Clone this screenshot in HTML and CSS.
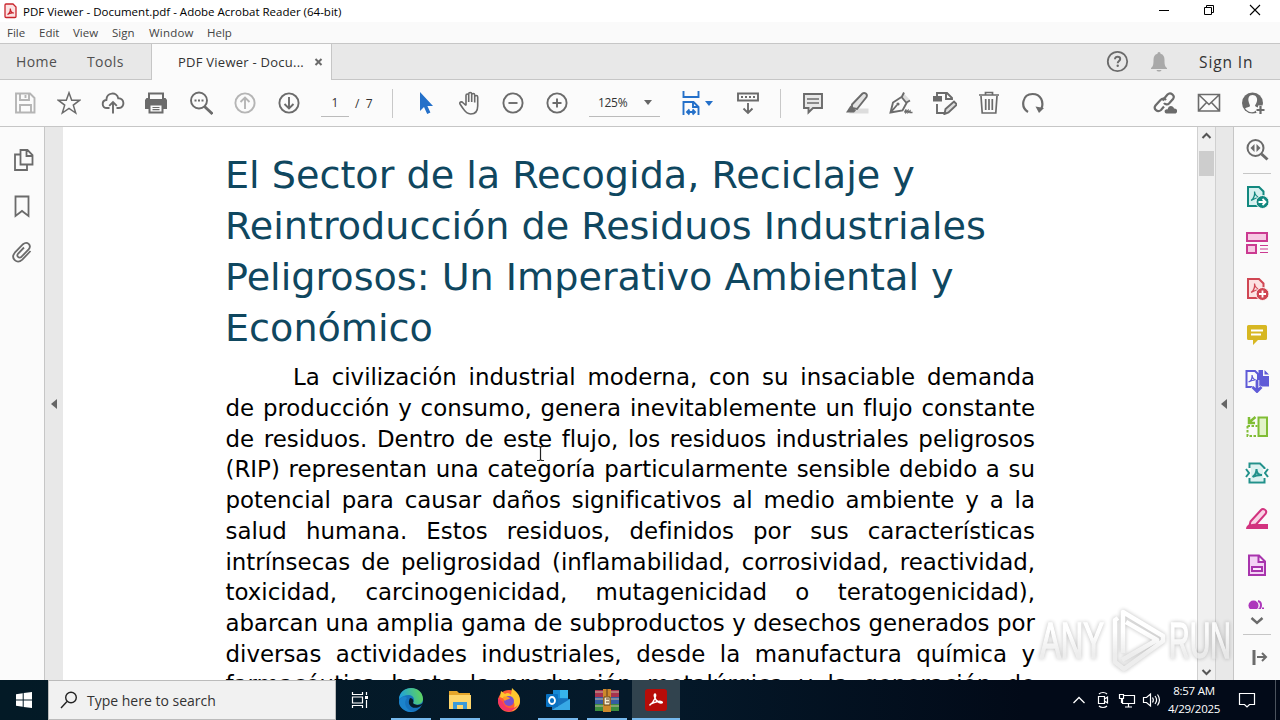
FILE: index.html
```html
<!DOCTYPE html>
<html lang="es">
  <head>
    <meta charset="UTF-8" />
    <meta name="viewport" content="width=device-width, initial-scale=1.0" />
    <title>PDF Viewer - Document.pdf</title>
    <link rel="stylesheet" href="styles.css">
  </head>
  <body>
    <div class="titlebar">
      <svg class="app-icon" width="13" height="16" viewBox="0 0 13 16"><path d="M2 1h7l3 3v9.500q0 1-1 1H2q-1 0-1-1V2q0-1 1-1z" fill="#fbe3e3" stroke="#c9252d" stroke-width="1.300"/><path d="M3.500 11.500c2-1 3-3.500 2.800-6 .2 2.500 1.700 4.500 3.700 4.500-3-.5-5 .2-6.500 1.500z" fill="none" stroke="#c9252d" stroke-width="1.200"/></svg>
      <span class="title">PDF Viewer - Document.pdf - Adobe Acrobat Reader (64-bit)</span>
      <div class="window-btns">
        <svg width="46" height="22"><path d="M19 10.500h10" stroke="#000"/></svg>
        <svg width="46" height="22"><path d="M18.500 7.500h7v7h-7zM20.500 7.500v-2h7v7h-2" fill="none" stroke="#000"/></svg>
        <svg width="46" height="22"><path d="M18 5l10 10M28 5l-10 10" stroke="#000" stroke-width="1.100"/></svg>
      </div>
    </div>
    <div class="menubar">
      <span class="m-file">File</span><span class="m-edit">Edit</span><span class="m-view">View</span><span class="m-sign">Sign</span><span class="m-window">Window</span><span class="m-help">Help</span>
    </div>
    <div class="tabs">
      <div class="tab-link home">Home</div>
      <div class="tab-link tools">Tools</div>
      <div class="tab">
        <span class="tab-name">PDF Viewer - Docu...</span>
        <svg width="9" height="9" viewBox="0 0 9 9"><path d="M1.500 1l6 6M7.500 1l-6 6" stroke="#6b6b6b" stroke-width="2"/></svg>
      </div>
      <div class="account">
        <svg class="help" width="24" height="24" viewBox="0 0 24 24"><circle cx="12.500" cy="11.500" r="9.700" fill="none" stroke="#6b6b6b" stroke-width="1.800"/><path d="M10 9.300c0-3.600 5.200-3.200 5.200-.3 0 2-2.500 2-2.500 4.200" fill="none" stroke="#6b6b6b" stroke-width="2"/><circle cx="12.700" cy="15.800" r="1.200" fill="#6b6b6b"/></svg>
        <svg class="bell" width="18" height="22" viewBox="0 0 18 22"><path d="M9 1c1 0 1.500.8 1.500 1.800 3 .7 4 3 4 6.200 0 5 .5 6.500 2.500 8v1H1v-1c2-1.500 2.500-3 2.500-8 0-3.200 1-5.500 4-6.200C7.500 1.800 8 1 9 1zM6.500 19h5c-.5 2-4.500 2-5 0z" fill="#a9a9a9"/></svg>
        <span class="signin">Sign In</span>
      </div>
    </div>

    <div class="toolbar">
      <div class="tool off"><svg viewBox="0 0 24 24"><path d="M3 2.500h14l4.500 4.500V21.500H3zM7 3v6h9V3M7 21v-7h11v7M12.500 4v3"/></svg></div>
      <div class="tool"><svg viewBox="0 0 24 24"><path d="M12 1.800l2.700 7.400h8l-6.400 4.900 2.400 7.900-6.700-4.700L5.300 22l2.400-7.900-6.400-4.900h8z" stroke-width="1.500"/></svg></div>
      <div class="tool"><svg viewBox="0 0 24 24"><path d="M8.500 17H6c-5.500 0-5.700-7.500-.6-8C5.500 1 16 .5 17.200 7.200 24 7 24 17 18 17h-2.500M12 22.500V11M8.200 14.800L12 11l3.800 3.800"/></svg></div>
      <div class="tool print"><svg viewBox="0 0 24 24"><path class="solid" d="M4 1.500h16v5.500h1.500L23 9v9h-3.500v4.500h-15V18H1V9l1.500-2H4z"/><path d="M6 3.500h12V8H6zM6.500 14.500h11v6h-11z" style="fill:#fbfbfb;stroke:none"/><path d="M8.500 16.500h7M8.500 18.700h7" style="stroke-width:1.2"/></svg></div>
      <div class="tool"><svg viewBox="0 0 24 24"><circle cx="10" cy="9.500" r="8"/><path d="M15.500 15.500l8 7.500" style="stroke-width:2.800"/><path d="M5.500 9.500h2M9 9.500h2M12.500 9.500h2"/></svg></div>
      <div class="tool off"><svg viewBox="0 0 24 24"><circle cx="12" cy="12" r="9.600"/><path d="M12 18V6.500M7.500 11L12 6.500l4.500 4.500"/></svg></div>
      <div class="tool"><svg viewBox="0 0 24 24"><circle cx="12" cy="12" r="9.600"/><path d="M12 6v11.500M7.500 13l4.500 4.500 4.500-4.500"/></svg></div>
      <div class="page-no">1</div>
      <div class="page-total">/&nbsp; 7</div>
      <div class="sep sep-a"></div>
      <div class="tool"><svg viewBox="0 0 24 24"><path d="M7 1v19l4-4 3.200 7 3.200-1.500-3-6.500H20z" style="fill:#2470c9;stroke:none"/></svg></div>
      <div class="tool"><svg viewBox="0 0 24 24"><path d="M7 14.500V4.500c0-2 2.700-2 2.700 0V11 3c0-2 3-2 3 0v8-7c0-2 3-2 3 0v7.500V6c0-2 3-2 3 0v9c0 5-2 8-7 8-4 0-5.500-2-7.500-5.300L1 13c-1-2 1.500-3 3-1.200L7 14.500" transform="translate(2 0)" style="stroke-width:1.600"/></svg></div>
      <div class="tool"><svg viewBox="0 0 24 24"><circle cx="12" cy="12" r="9.600"/><path d="M7.500 12h9"/></svg></div>
      <div class="tool"><svg viewBox="0 0 24 24"><circle cx="12" cy="12" r="9.600"/><path d="M7.500 12h9M12 7.500v9"/></svg></div>
      <div class="zoom"><span>125%</span><i class="caret"></i></div>
      <div class="fit"><svg width="20" height="26" viewBox="0 0 20 26"><path d="M2.500 1v6h15V1M2.500 25V12h10l5 5v8M12 12v5h5M6 22h8M8.500 19.500L6 22l2.500 2.500M11.500 19.500L14 22l-2.500 2.500" fill="none" stroke="#2470c9" stroke-width="1.900"/></svg><i class="caret blue"></i></div>
      <div class="tool scroll-tool"><svg viewBox="0 0 24 24"><path d="M2 2.500h20v7H2zM5 6h2M9 6h2M13 6h2M17 6h2M12 12v10M7.500 17.500L12 22l4.500-4.500"/></svg></div>
      <div class="sep sep-b"></div>
      <div class="tool"><svg viewBox="0 0 24 24"><path d="M3 3h18v14h-9l-4.500 4.500V17H3z" style="fill:#e8e8e8"/><path d="M6 8h12M6 12h12" style="stroke-width:1.300"/></svg></div>
      <div class="tool"><svg viewBox="0 0 24 24"><path d="M9 17.500h14.500v5H4z" style="fill:#ddd;stroke:none"/><path d="M7 13.500L17.500 2.500c2-1.500 5.500.5 4 3.500L12 18l-5-1z" style="fill:#e2e2e2"/><path class="solid" d="M5.500 14.500l5.500 5-2 2H1z"/></svg></div>
      <div class="tool"><svg viewBox="0 0 24 24"><path d="M15 2.500l6 6.500-3 2-4.500-5z" style="fill:#ddd;stroke:none"/><path d="M1.500 21.500L4 11.500l8.500-5.500 5 6-4 7.500zM2 21l6-7M12.500 6.500l2.500-5M17.500 11.500l3.500-2"/><circle class="solid" cx="9" cy="13" r="1.600"/><path d="M15.500 21.500l1.500-3v3l2-2v2l2-1.500v1.500h2.500" style="stroke-width:1.400"/></svg></div>
      <div class="tool"><svg viewBox="0 0 24 24"><path class="solid" d="M0 5h9v5.500H0z"/><path d="M4 5V2h10l5 5v2M13 2v6h6M4 13v9h7"/><path d="M11.500 23l1-5 8.500-7.500 3 3-8.500 8z" style="fill:#ddd"/></svg></div>
      <div class="tool"><svg viewBox="0 0 24 24"><path d="M2 4h20M8.500 4V1.500h7V4M4 5l1.200 17h13.600L20 5M8.700 8v11M12 8v11M15.300 8v11" style="stroke-width:1.700"/></svg></div>
      <div class="tool"><svg viewBox="0 0 24 24"><path d="M7 21C-1 16 1.500 3 11.500 3c8.500 0 11.500 8 9 14.500" style="stroke-width:2.200"/><path class="solid" d="M14.500 15.500l8.500 1.500-5 5z"/></svg></div>
      <div class="share">
        <div class="tool"><svg viewBox="0 0 24 24"><path d="M9.500 9.500l5-6c3-3 8 1 5.500 4.500l-4 4.500c-1.500 1.500-4 1-5-.5M13 9c-1.500-2-4-1.500-5.500 0l-5 5.500C0 18 4.500 22 8 19l3-3.500" style="stroke-width:2.200"/><path class="solid" d="M13.500 22.500c-3.500-1-1.500-5 1-4 1-5 6-4 6.500-1 4-.5 4 5 1 5z"/></svg></div>
        <div class="tool"><svg viewBox="0 0 24 24"><path d="M1.500 3.500h21v16.500h-21zM2 4l10 9.500L22 4M2 19.500l7.500-8M22 19.500l-7.500-8" style="stroke-width:1.600"/></svg></div>
        <div class="tool"><svg viewBox="0 0 24 24"><circle class="solid" cx="11.500" cy="12" r="10.500"/><path d="M11.500 4c-3.500 0-4.500 3-4 6 .3 2 1.500 4 1.500 5s-4 1.500-5 2.500c4 5 10 5 13-.5l-3-2c0-1 1.700-3 2-5 .5-3-1-6-4.500-6z" style="fill:#fbfbfb;stroke:none"/><path d="M19.500 14.500v9M15 19h9" style="stroke:#fbfbfb;stroke-width:5"/><path d="M19.500 15v8M15.500 19h8" style="stroke-width:2.200"/></svg></div>
      </div>
    </div>

    <div class="workspace">
      <div class="left-rail">
        <svg viewBox="0 0 24 24"><path d="M9.500 2h7l5 5v9.500h-12zM15.500 2v6h6M9 6.500H4v15.500h12V17"/></svg>
        <svg viewBox="0 0 24 24"><path d="M4.500 2.500h13V22l-6.500-5-6.500 5z"/></svg>
        <svg viewBox="0 0 24 24"><path d="M19.500 11l-8.200 8.700c-5.500 5-12-1.500-7.500-7L12 4.200c4.200-3.500 9 1 5.600 5.200l-7 7.300c-2.800 2.300-5.600-.6-3.400-3.200l5.800-6"/></svg>
      </div>
      <div class="gutter left-gutter"><i class="collapse"></i></div>
      <div class="page">
        <h1>El Sector de la Recogida, Reciclaje y<br />Reintroducción de Residuos Industriales<br />Peligrosos: Un Imperativo Ambiental y<br />Económico</h1>
        <div class="text">
          <p class="first">La civilización industrial moderna, con su insaciable demanda</p>
          <p>de producción y consumo, genera inevitablemente un flujo constante</p>
          <p>de residuos. Dentro de este flujo, los residuos industriales peligrosos</p>
          <p>(RIP) representan una categoría particularmente sensible debido a su</p>
          <p>potencial para causar daños significativos al medio ambiente y a la</p>
          <p>salud humana. Estos residuos, definidos por sus características</p>
          <p>intrínsecas de peligrosidad (inflamabilidad, corrosividad, reactividad,</p>
          <p>toxicidad, carcinogenicidad, mutagenicidad o teratogenicidad),</p>
          <p>abarcan una amplia gama de subproductos y desechos generados por</p>
          <p>diversas actividades industriales, desde la manufactura química y</p>
          <p>farmacéutica hasta la producción metalúrgica y la generación de</p>
        </div>
      </div>
      <div class="scrollbar">
        <svg width="17" height="17"><path d="M4.500 11l4-4 4 4" fill="none" stroke="#555" stroke-width="2"/></svg>
        <div class="thumb"></div>
        <svg class="down" width="17" height="17"><path d="M4.500 7l4 4 4-4" fill="none" stroke="#555" stroke-width="2"/></svg>
      </div>
      <div class="gutter right-gutter"><i class="collapse"></i></div>
      <div class="right-rail">
        <div class="search-tool"><svg viewBox="0 0 24 24" stroke="#6b6b6b"><circle cx="10.500" cy="10" r="8"/><path d="M16.500 16l6 5.500" style="stroke-width:3"/><path d="M9.500 6v8L5.500 10zM11.500 6v8l4-4z" fill="#6b6b6b" stroke="none"/></svg></div>
        <div><svg viewBox="0 0 24 24" stroke="#12887f"><path d="M3 2h11l4.500 4.500v14.500H3z" fill="#d6f0ef"/><path d="M6 15.500c3-2 4-5 3.500-9 .5 4 2.500 6 6.500 6-4 0-7 1-10 3" style="stroke-width:1.200"/><circle cx="17.500" cy="17" r="6.500" fill="#12887f" style="stroke:#fafafa;stroke-width:1"/><path d="M13.500 17h7M17.500 14l3 3-3 3" style="stroke:#fff;stroke-width:1.800"/></svg></div>
        <div><svg viewBox="0 0 24 24" stroke="#cb3a91"><path d="M2 2h20v8H2zM2 14h9v8H2z" fill="#f7c9e3"/><path d="M15 14.500h8M15 18h8M15 21.500h8" style="stroke-width:1.200"/></svg></div>
        <div><svg viewBox="0 0 24 24" stroke="#d04653"><path d="M3 2h11l4.500 4.500v14.500H3z" fill="#fce1e1"/><path d="M6 15.500c3-2 4-5 3.500-9 .5 4 2.500 6 6.500 6-4 0-7 1-10 3" style="stroke-width:1.200"/><circle cx="17.500" cy="17" r="6.500" fill="#d04653" style="stroke:#fafafa;stroke-width:1"/><path d="M14 17h7M17.500 13.500v7" style="stroke:#fff;stroke-width:1.800"/></svg></div>
        <div><svg viewBox="0 0 24 24"><path d="M3.500 2h17q1.500 0 1.500 1.500v12q0 1.500-1.500 1.500H13l-5 5v-5H3.500Q2 17 2 15.500v-12Q2 2 3.500 2z" fill="#d7b722"/><path d="M6 7.500h12M6 11.500h10" stroke="#fff"/></svg></div>
        <div><svg viewBox="0 0 24 24" stroke="#5f5bd7"><path d="M9 18H1.500V2H10l3 3v9"/><path d="M3.500 13c3-1 4-3 3.500-7 .5 4 2 5 4.500 5-3 0-5 0-8 2" style="stroke-width:1.200"/><path d="M13.500 1H18v6h6v10.500H13.500zM19.500 1L24 5.500h-4.500z" fill="#5f5bd7" stroke="none"/><path d="M12 11v12M7 18l5 5 5-5" style="stroke:#fafafa;stroke-width:4.500"/><path d="M12 11v11.500M7.500 18l4.500 4.500 4.500-4.500" style="stroke-width:2.800"/></svg></div>
        <div><svg viewBox="0 0 24 24" stroke="#80bd35"><path d="M13.500 2.500h8.500v18.500h-8.500z" fill="#e2f3c9"/><path d="M2.500 11v10h10M2.500 11h10" stroke-dasharray="2.500 1.500"/><path d="M10.500 2l-6 5M4 2v6h6" style="stroke-width:2.500"/></svg></div>
        <div><svg viewBox="0 0 24 24" stroke="#21918b"><path d="M6 4h9l3 4v12H6z" fill="#dcf2f1" stroke="none"/><path d="M4.500 7V2.500h10.500l4.500 4.500V8M4.500 17v4.500h15V17"/><path d="M7.500 16c3-2 4-4 4-8 0 4 1.500 6 5.500 6-3 0-6 0-9.500 2M1 8l3 4-3 4M23 8l-3 4 3 4"/></svg></div>
        <div><svg viewBox="0 0 24 24" stroke="#d2337f"><path d="M1 22c0-3 2-4 4-5h18v5z" fill="#d2337f" stroke="none"/><path d="M5.500 14.500L16 3c2-2 7 0 4.500 4L11 17.500l-6.500 1z" fill="#f9d4e6"/></svg></div>
        <div><svg viewBox="0 0 24 24" stroke="#a834ad"><path d="M4 2.500h10l6 6V22H4zM13.500 3v6H20" fill="#f3d3f5"/><rect x="7" y="14" width="10" height="4" fill="#fbeafd"/></svg></div>
        <div class="peek"><svg viewBox="0 0 24 24"><circle cx="8.500" cy="6.500" r="5" fill="#ad35bb"/><path d="M13 2c4 1 4 7 0 9" stroke="#ad35bb"/><path d="M17 9.500h2" stroke="#ad35bb"/></svg></div>
        <svg class="more" width="16" height="10" viewBox="0 0 16 10"><path d="M2.500 2L8 7l5.500-5" fill="none" stroke="#6b6b6b" stroke-width="2.400"/></svg>
        <div class="expand"><svg viewBox="0 0 24 24" stroke="#6b6b6b"><path d="M9 4v15" style="stroke-width:3"/><path d="M12 11h9M17 7l4 4-4 4"/></svg></div>
      </div>
    </div>

    <div class="taskbar">
      <div class="start"><svg width="16" height="16" viewBox="0 0 16 16"><path d="M0 2.300L6.700 1.300v6.200H0zM7.700 1.100L16 0v7.500H7.700zM0 8.500h6.700v6.200L0 13.700zM7.700 8.500H16V16l-8.300-1.100z" fill="#fff"/></svg></div>
      <div class="searchbox">
        <svg width="18" height="18" viewBox="0 0 18 18"><circle cx="11" cy="6.500" r="5.300" fill="none" stroke="#222" stroke-width="1.400"/><path d="M7 10.500L1 17" stroke="#222" stroke-width="1.400"/></svg>
        <span>Type here to search</span>
      </div>
      <div class="app taskview"><svg width="18" height="18" viewBox="0 0 18 18"><path d="M1.500 1v2.500h10V1M1.500 6h10v6h-10zM1.500 17v-2.500h10V17M15.500 1v3M15.500 9v8" fill="none" stroke="#fff" stroke-width="1.200"/><path d="M14 5h3v3h-3z" fill="#fff"/></svg></div>
      <div class="app open"><svg width="24" height="24" viewBox="0 0 24 24"><defs><linearGradient id="edge" x1="0" x2="1" y1=".3" y2=".1"><stop offset="0" stop-color="#1ea1dc"/><stop offset="1" stop-color="#65d852"/></linearGradient></defs><circle cx="12" cy="12" r="12" fill="#1672bd"/><path d="M0 11C1-3 23-4 24 11c0 6-8 7-10 4 4-7-5-12-14-4z" fill="url(#edge)"/><path d="M11 10c-4 7 3 13 11 8 1-1 2-2 2-3-3 3-9 2-10 0 1-2 0-5-3-5z" fill="#071c29"/><path d="M8 10c-5 6 1 15 9 13-11 4-20-6-16-12 2-3 5-3 7-1z" fill="#1b83cc"/></svg></div>
      <div class="app open"><svg width="22" height="20" viewBox="0 0 22 20"><path d="M0 1h8l2 2h11v16H0z" fill="#e6a62a"/><path d="M0 5h22v14H0z" fill="#ffd66b"/><path d="M4 19v-7h14v7h-4v-4H8v4z" fill="#3d9ad7"/></svg></div>
      <div class="app"><svg width="24" height="24" viewBox="0 0 24 24"><circle cx="12" cy="13" r="11" fill="#ff5b35"/><path d="M4 3l4 3c2-2 5-1 6 1l1-7c4 4 8 6 8 13 0 5-4 9-8 10 4-5 3-10-2-12-3 1-8-1-10-2z" fill="#ffc72f"/><path d="M1 10C0 25 16 27 21 17c-5 6-14 3-15-3z" fill="#f33567"/><circle cx="12" cy="13" r="5" fill="#7851cf"/><path d="M6 9c3-1 5 0 7 1-1 2-4 1-5 3-1-1-2-2-2-4z" fill="#ff9b28"/></svg></div>
      <div class="app open"><svg width="24" height="22" viewBox="0 0 24 22"><path d="M7 1h15v9H7z" fill="#1589d5"/><path d="M14 1h8v8h-8z" fill="#36b4ed"/><path d="M6 9l18 1v11H6z" fill="#1673bd"/><path d="M6 21l18-11v11z" fill="#38a9e5"/><rect y="5" width="12" height="13" rx="1" fill="#0871c1"/><ellipse cx="6" cy="11.500" rx="3" ry="3.500" fill="none" stroke="#fff" stroke-width="1.800"/></svg></div>
      <div class="app open"><svg width="24" height="23" viewBox="0 0 24 23"><path d="M0 1h24v7H0z" fill="#a6334f"/><path d="M0 8h24v7H0z" fill="#355ca1"/><path d="M0 15h24v7H0z" fill="#3c8d3e"/><path d="M0 3h24M0 10h24M0 17h24" stroke="#c7b7a0"/><path d="M8 0h8v23H8z" fill="#cd892c"/><path d="M9 8h6v8H9z" fill="#f5edcf" stroke="#604018"/><path d="M12 0v7M11 10h3M11 13h3" stroke="#5a3820"/></svg></div>
      <div class="app open active"><svg width="22" height="22" viewBox="0 0 22 22"><rect width="22" height="22" rx="3" fill="#b70c08"/><path d="M5 16c4-3 7-10 5-11-2 0 0 8 6 9 3 0 1-3-5-1-4 1-7 3-6 3z" fill="none" stroke="#fff" stroke-width="1.400"/></svg></div>
      <div class="tray">
        <svg width="24" height="24" viewBox="0 0 24 24"><path d="M6.500 15l5.500-5.500 5.500 5.500" fill="none" stroke="#fff" stroke-width="1.300"/></svg>
        <svg width="24" height="24" viewBox="0 0 24 24"><path d="M7.500 8.500h6v7h-6zM13.500 11l3-2v6l-3-2M8 6c2-2 6-2 8 0M8 18c2 2 6 2 8 0" fill="none" stroke="#fff" stroke-width="1.200"/></svg>
        <svg width="24" height="24" viewBox="0 0 24 24"><path d="M9 7.500h10.500v8H7.500V11M13.500 15.500v3.500M10 19h7M4.500 6.500h4v4h-4zM6.500 11v4" fill="none" stroke="#fff" stroke-width="1.200"/></svg>
        <svg width="24" height="24" viewBox="0 0 24 24"><path d="M4.500 9.500h3l4-3.500v12l-4-3.500h-3zM13.500 9.500c1 1.500 1 3.500 0 5M16 8c2 2.500 2 5.500 0 8M18.500 6.500c2.500 3.500 2.500 7.500 0 11" fill="none" stroke="#fff" stroke-width="1.200"/></svg>
        <div class="clock">8:57 AM<br />4/29/2025</div>
        <svg class="notify" width="18" height="18" viewBox="0 0 18 18"><path d="M1.500 2.500h15v11h-5L9 16l-2.500-2.500h-5z" fill="none" stroke="#fff" stroke-width="1.200"/></svg>
        <div class="desktop"></div>
      </div>
    </div>

    <!-- overlays -->
    <svg class="cursor" width="9" height="17" viewBox="0 0 9 17"><path d="M1 1.500h2.500l1 1 1-1H8M4.500 2v13M1 15.500h2.500l1-1 1 1H8" fill="none" stroke="#222" stroke-width="1.200"/></svg>
    <svg class="watermark" width="200" height="68" viewBox="0 0 200 68">
      <defs><linearGradient id="fade" gradientUnits="userSpaceOnUse" x1="0" y1="8" x2="0" y2="62"><stop offset=".3" stop-color="#fff"/><stop offset=".7" stop-color="#e8e8e8"/></linearGradient></defs>
      <text x="4" y="50" textLength="64" lengthAdjust="spacingAndGlyphs">ANY</text>
      <text x="133" y="50" textLength="62" lengthAdjust="spacingAndGlyphs">RUN</text>
      <path class="logo" d="M82 10l-3 2v42l9 7 39-28v-5L87 4v41M90 14l31 18-35 20"/>
    </svg>
  </body>
</html>
```
FILE: styles.css
```css
* {
  margin: 0;
  padding: 0;
  box-sizing: border-box;
}
body {
  position: relative;
  width: 1280px;
  height: 720px;
  overflow: hidden;
  background: #fff;
  color: #333;
  font-family: "Open Sans", "Noto Sans", sans-serif;
}
svg {
  display: block;
  flex-shrink: 0;
}
.titlebar {
  height: 22px;
  padding-left: 4px;
  display: flex;
  align-items: center;
}
.title {
  margin-left: 6px;
  font-size: 11.5px;
  color: #000;
}
.window-btns {
  margin-left: auto;
  margin-right: 2px;
  display: flex;
}
.menubar {
  height: 21px;
  background: #fafafa;
  padding-left: 7px;
  display: flex;
  align-items: center;
  font-size: 11.5px;
  color: #444;
}
.m-file { width: 32px; }
.m-edit { width: 34px; }
.m-view { width: 39px; }
.m-sign { width: 37px; }
.m-window { width: 58px; letter-spacing: 0.2px; }
.tabs {
  height: 37px;
  background: #e8e8e8;
  border-top: 1px solid #c6c6c6;
  border-bottom: 1px solid #c6c6c6;
  display: flex;
}
.tab-link {
  font-size: 14px;
  line-height: 36px;
  color: #505050;
  letter-spacing: 0.4px;
}
.home {
  width: 87px;
  padding-left: 16px;
}
.tools {
  width: 64px;
}
.tab {
  width: 181px;
  height: 36px;
  background: #fbfbfb;
  border-left: 1px solid #c6c6c6;
  border-right: 1px solid #c6c6c6;
  padding-left: 26px;
  display: flex;
  align-items: center;
}
.tab-name {
  width: 136px;
  font-size: 13px;
  letter-spacing: 0.25px;
  white-space: nowrap;
}
.account {
  margin-left: auto;
  width: 175px;
  display: flex;
  align-items: center;
}
.bell {
  margin-left: 21px;
}
.signin {
  margin-left: 31px;
  font-size: 15.5px;
  line-height: 34px;
  letter-spacing: 0.9px;
  white-space: nowrap;
}
.toolbar {
  height: 47px;
  background: #fbfbfb;
  border-bottom: 1px solid #c6c6c6;
  padding-left: 3px;
  display: flex;
  align-items: center;
}
.tool {
  width: 44px;
  flex-shrink: 0;
  display: flex;
  justify-content: center;
}
.tool svg {
  width: 24px;
  height: 24px;
  fill: none;
  stroke: #6b6b6b;
  stroke-width: 1.9;
}
.tool.off svg {
  stroke: #b5b5b5;
}
.print {
  padding-right: 2px;
}
.tool .solid {
  fill: #6b6b6b;
  stroke: none;
}
.page-no {
  margin-left: 10px;
  width: 28px;
  height: 28px;
  border-bottom: 1px solid #bbb;
  text-align: center;
  font-size: 12px;
  line-height: 28px;
}
.page-total {
  margin-left: 6px;
  width: 37px;
  font-size: 12px;
}
.sep {
  width: 1px;
  height: 29px;
  background: #c8c8c8;
}
.sep-a {
  margin-right: 10px;
}
.zoom {
  margin-left: 10px;
  width: 71px;
  height: 28px;
  padding: 0 8px 0 9px;
  border-bottom: 1px solid #bbb;
  display: flex;
  align-items: center;
  justify-content: space-between;
  font-size: 12px;
  letter-spacing: -0.3px;
}
.caret {
  border: 4px solid transparent;
  border-top: 5px solid #666;
  border-bottom: 0;
}
.blue {
  border-top-color: #2470c9;
}
.fit {
  margin-left: 21px;
  width: 45px;
  display: flex;
  align-items: center;
  gap: 4px;
}
.sep-b {
  margin-left: 10px;
  margin-right: 10px;
}
.share {
  margin-left: auto;
  margin-right: 5px;
  display: flex;
}
.workspace {
  height: 553px;
  display: flex;
  overflow: hidden;
}
.left-rail {
  width: 45px;
  background: #fbfbfb;
  border-right: 1px solid #c6c6c6;
  padding: 21px 0 0 11px;
}
.left-rail svg {
  width: 24px;
  height: 24px;
  margin-bottom: 22px;
  fill: none;
  stroke: #6b6b6b;
  stroke-width: 1.8;
}
.gutter {
  width: 18px;
  background: #e8e8e8;
  display: flex;
  align-items: center;
  justify-content: center;
}
.collapse {
  border: 5.5px solid transparent;
  border-right: 6px solid #666;
  border-left: 0;
}
.page {
  width: 1134px;
  height: 553px;
  overflow: hidden;
  padding: 23px 0 0 162px;
  font-family: "DejaVu Sans", sans-serif;
}
h1 {
  font-size: 38.13px;
  font-weight: normal;
  line-height: 51px;
  color: #0f475f;
  white-space: nowrap;
}
.text {
  width: 810px;
  margin-top: 8.25px;
  padding-left: 0.5px;
  font-size: 22.9px;
  line-height: 30.72px;
  color: #000;
}
.text p {
  text-align: justify;
  text-align-last: justify;
  white-space: nowrap;
}
.text .first {
  padding-left: 67.5px;
}
.scrollbar {
  width: 19px;
  background: #f0f0f0;
  border-left: 1px solid #d0d0d0;
  border-right: 1px solid #d0d0d0;
  display: flex;
  flex-direction: column;
}
.thumb {
  margin: 7px 1px 0;
  height: 25px;
  background: #cdcdcd;
}
.down {
  margin-top: auto;
}
.right-gutter {
  width: 17px;
  padding-right: 2px;
}
.right-rail {
  width: 47px;
  background: #fafafa;
  border-left: 1px solid #c6c6c6;
  display: flex;
  flex-direction: column;
  align-items: center;
}
.right-rail div {
  width: 28px;
  height: 46px;
  display: flex;
  align-items: center;
  justify-content: center;
}
.right-rail div svg {
  width: 24px;
  height: 24px;
  fill: none;
  stroke-width: 2;
}
.right-rail .search-tool {
  height: 47px;
  border-bottom: 1px solid #c6c6c6;
}
.right-rail .peek {
  height: 21px;
  overflow: hidden;
  align-items: flex-start;
  padding-top: 11px;
}
.right-rail .expand {
  margin-top: 8px;
  border-top: 1px solid #c6c6c6;
}
.more {
  margin-top: 7px;
}
.taskbar {
  height: 40px;
  background: linear-gradient(90deg, #031a26, #04192a 50%, #020a18 80%);
  display: flex;
}
.start {
  width: 48px;
  display: flex;
  align-items: center;
  justify-content: center;
}
.searchbox {
  width: 288px;
  background: #f1f1f1;
  border: 1px solid #bbb;
  padding-left: 11px;
  display: flex;
  align-items: center;
  gap: 9px;
  font-size: 14px;
}
.app {
  width: 48px;
  height: 40px;
  margin-right: 1px;
  display: flex;
  align-items: center;
  justify-content: center;
}
.taskview {
  margin-right: 3px;
}
.open {
  background: linear-gradient(#76b9ed, #76b9ed) center bottom / 40px 2px no-repeat;
}
.active {
  background-color: #31434e;
  background-size: 48px 2px;
}
.tray {
  margin-left: auto;
  display: flex;
  align-items: center;
  color: #fff;
}
.clock {
  width: 62px;
  font-size: 11.5px;
  line-height: 18px;
  text-align: center;
  letter-spacing: -0.25px;
}
.notify {
  margin-left: 13px;
}
.desktop {
  width: 5px;
  height: 40px;
  margin-left: 19px;
  border-left: 1px solid #4b535d;
}
.cursor {
  position: absolute;
  left: 536px;
  top: 445px;
}
.watermark {
  position: absolute;
  left: 1036px;
  top: 608px;
  overflow: visible;
  font-family: "Liberation Sans", sans-serif;
  font-size: 50px;
  fill: url(#fade);
  stroke: url(#fade);
  stroke-width: 1.5;
  opacity: 0.75;
  filter: drop-shadow(0 0 2px rgba(0, 0, 0, 0.35));
}
.logo {
  fill: none;
  stroke-width: 4.5;
  stroke-linejoin: round;
}
```
